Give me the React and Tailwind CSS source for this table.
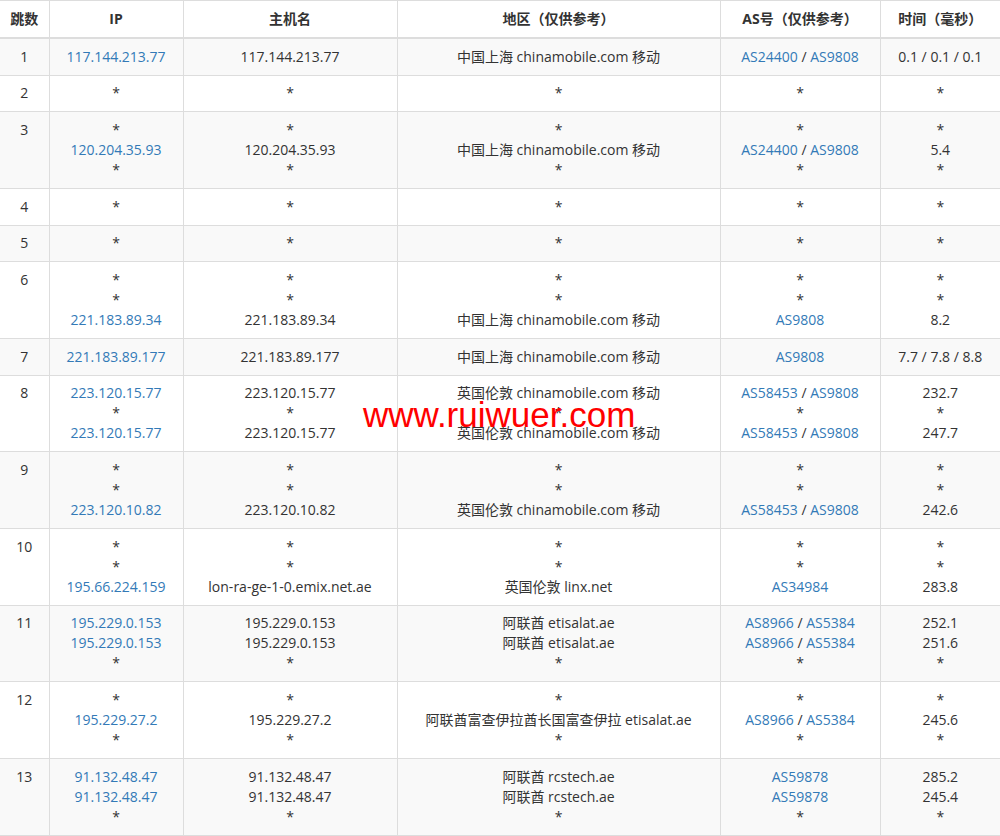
const CN = "中国上海 chinamobile.com 移动";
const UK = "英国伦敦 chinamobile.com 移动";
const UAE = "阿联酋 etisalat.ae";

const HOPS = [
  { ip: ["117.144.213.77"], host: ["117.144.213.77"], region: [CN], as: [["AS24400", "AS9808"]], time: ["0.1 / 0.1 / 0.1"] },
  { ip: ["*"], host: ["*"], region: ["*"], as: ["*"], time: ["*"] },
  { ip: ["*", "120.204.35.93", "*"], host: ["*", "120.204.35.93", "*"], region: ["*", CN, "*"], as: ["*", ["AS24400", "AS9808"], "*"], time: ["*", "5.4", "*"] },
  { ip: ["*"], host: ["*"], region: ["*"], as: ["*"], time: ["*"] },
  { ip: ["*"], host: ["*"], region: ["*"], as: ["*"], time: ["*"] },
  { ip: ["*", "*", "221.183.89.34"], host: ["*", "*", "221.183.89.34"], region: ["*", "*", CN], as: ["*", "*", ["AS9808"]], time: ["*", "*", "8.2"] },
  { ip: ["221.183.89.177"], host: ["221.183.89.177"], region: [CN], as: [["AS9808"]], time: ["7.7 / 7.8 / 8.8"] },
  { ip: ["223.120.15.77", "*", "223.120.15.77"], host: ["223.120.15.77", "*", "223.120.15.77"], region: [UK, "*", UK], as: [["AS58453", "AS9808"], "*", ["AS58453", "AS9808"]], time: ["232.7", "*", "247.7"] },
  { ip: ["*", "*", "223.120.10.82"], host: ["*", "*", "223.120.10.82"], region: ["*", "*", UK], as: ["*", "*", ["AS58453", "AS9808"]], time: ["*", "*", "242.6"] },
  { ip: ["*", "*", "195.66.224.159"], host: ["*", "*", "lon-ra-ge-1-0.emix.net.ae"], region: ["*", "*", "英国伦敦 linx.net"], as: ["*", "*", ["AS34984"]], time: ["*", "*", "283.8"] },
  { ip: ["195.229.0.153", "195.229.0.153", "*"], host: ["195.229.0.153", "195.229.0.153", "*"], region: [UAE, UAE, "*"], as: [["AS8966", "AS5384"], ["AS8966", "AS5384"], "*"], time: ["252.1", "251.6", "*"] },
  { ip: ["*", "195.229.27.2", "*"], host: ["*", "195.229.27.2", "*"], region: ["*", "阿联酋富查伊拉酋长国富查伊拉 etisalat.ae", "*"], as: ["*", ["AS8966", "AS5384"], "*"], time: ["*", "245.6", "*"] },
  { ip: ["91.132.48.47", "91.132.48.47", "*"], host: ["91.132.48.47", "91.132.48.47", "*"], region: ["阿联酋 rcstech.ae", "阿联酋 rcstech.ae", "*"], as: [["AS59878"], ["AS59878"], "*"], time: ["285.2", "245.4", "*"] },
];

const td = "border-t border-l border-[#dddddd] px-2 py-[7.84px] align-top text-center leading-5";
const th = "border-t border-l border-[#dddddd] px-2 py-2 leading-5 text-center font-bold";

function Lines({ items, link }) {
  return items.map((v, i) => (
    <div key={i} className={"h-5 overflow-hidden whitespace-nowrap " + (link && v !== "*" ? "text-[#337ab7]" : "")}>
      {v}
    </div>
  ));
}

function AsLines({ items }) {
  return items.map((v, i) =>
    v === "*" ? (
      <div key={i} className="h-5 overflow-hidden">*</div>
    ) : (
      <div key={i} className="h-5 overflow-hidden whitespace-nowrap">
        {v.map((a, j) => (
          <span key={a}>
            {j > 0 && " / "}
            <span className="text-[#337ab7]">{a}</span>
          </span>
        ))}
      </div>
    )
  );
}

export default function App() {
  return (
    <div className="relative w-[1000px] bg-white text-[14px] text-[#333333] font-['Open_Sans','Noto_Sans_CJK_SC',sans-serif]">
      <table className="w-[1000px] border-collapse table-fixed border-b border-[#dddddd]">
        <colgroup>
          <col className="w-[49px]" />
          <col className="w-[134px]" />
          <col className="w-[214px]" />
          <col className="w-[323px]" />
          <col className="w-[160px]" />
          <col className="w-[120px]" />
        </colgroup>
        <thead>
          <tr className="border-b-2 border-[#dddddd]">
            <th className="border-t border-[#dddddd] px-1 py-2 leading-5 text-center font-bold">跳数</th>
            <th className={th}>IP</th>
            <th className={th}>主机名</th>
            <th className={th}>地区（仅供参考）</th>
            <th className={th}>AS号（仅供参考）</th>
            <th className={th}>时间（毫秒）</th>
          </tr>
        </thead>
        <tbody>
          {HOPS.map((h, i) => (
            <tr key={i} className={i % 2 === 0 ? "bg-[#f9f9f9]" : "bg-white"}>
              <td className="border-t border-[#dddddd] px-1 py-[7.84px] align-top text-center leading-5">
                <div className="h-5 overflow-hidden">{i + 1}</div>
              </td>
              <td className={td}><Lines items={h.ip} link /></td>
              <td className={td}><Lines items={h.host} /></td>
              <td className={td}><Lines items={h.region} /></td>
              <td className={td}><AsLines items={h.as} /></td>
              <td className={td}><Lines items={h.time} /></td>
            </tr>
          ))}
        </tbody>
      </table>
      <div className="absolute left-[363px] top-[397px] text-[35px] leading-[35px] text-[#ff0000] font-['Liberation_Sans',Arial,sans-serif] pointer-events-none">
        www.ruiwuer.com
      </div>
    </div>
  );
}
